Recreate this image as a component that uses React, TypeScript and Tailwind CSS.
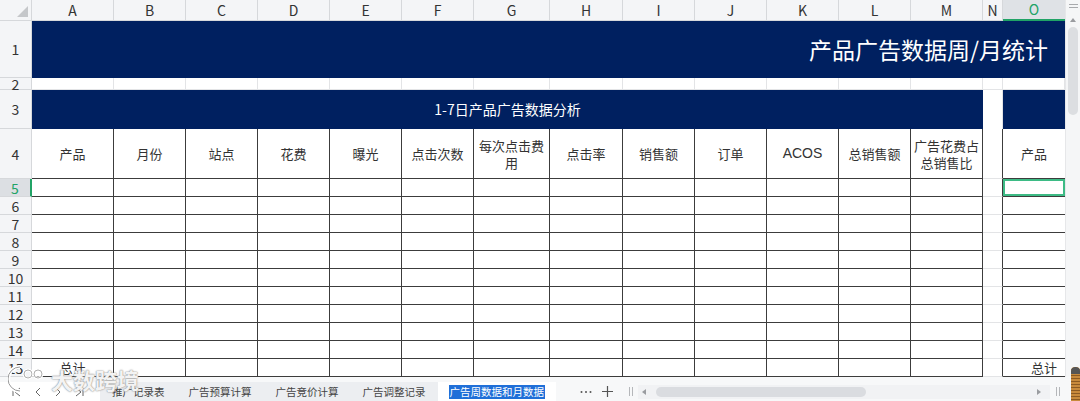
import React from 'react';

const COLS = ['A', 'B', 'C', 'D', 'E', 'F', 'G', 'H', 'I', 'J', 'K', 'L', 'M', 'N', 'O'];
const HEADS = ['产品', '月份', '站点', '花费', '曝光', '点击次数', '每次点击费用', '点击率', '销售额', '订单', 'ACOS', '总销售额', '广告花费占总销售比'];
const BODY_ROWS = [5, 6, 7, 8, 9, 10, 11, 12, 13, 14, 15];
const TABS = ['推广记录表', '广告预算计算', '广告竞价计算', '广告调整记录'];

const cjk = "font-['Noto_Sans_CJK_SC','Noto_Sans',sans-serif]";

function RowHead({ n, active }: { n: number; active?: boolean }) {
  return (
    <div
      className={
        active
          ? 'flex items-center justify-center bg-[#dcdfe3] border-b border-[#d6d8db] border-r-2 border-r-[#21a366] text-[14px] leading-none text-[#21a366]'
          : 'flex items-center justify-center bg-[#f4f5f7] border-r border-b border-[#d6d8db] text-[14px] leading-none text-[#333]'
      }
    >
      {n}
    </div>
  );
}

function Triangle({ dir }: { dir: 'l' | 'r' | 'u' }) {
  const pts = dir === 'l' ? '5,1 1,4 5,7' : dir === 'r' ? '1,1 5,4 1,7' : '1,6 4,2 7,6';
  return (
    <svg width="8" height="8" viewBox="0 0 8 8">
      <polygon points={pts} fill="#9a9ca0" />
    </svg>
  );
}

export default function App() {
  return (
    <div className={`relative w-[1080px] h-[401px] overflow-hidden bg-white ${cjk}`}>
      <div className="flex h-[377px]">
        <div className="grid grid-cols-[32px_82px_72px_72px_72px_72px_72px_76px_73px_72px_72px_72px_72px_72px_20px_62px] grid-rows-[21px_57px_12px_39px_50px_repeat(11,18px)] w-[1065px]">
          {/* column header */}
          <div className="relative bg-[#f4f5f7] border-r border-b border-[#d6d8db]">
            <svg className="absolute right-[3px] bottom-[3px]" width="11" height="11" viewBox="0 0 11 11">
              <polygon points="11,0 11,11 0,11" fill="#c5c7ca" />
            </svg>
          </div>
          {COLS.map((c) =>
            c === 'O' ? (
              <div key={c} className="flex items-center justify-center bg-[#dfe2e6] border-b-2 border-[#21a366] text-[14px] text-[#21a366]">
                {c}
              </div>
            ) : (
              <div key={c} className="flex items-center justify-center bg-[#f4f5f7] border-r border-b border-[#d6d8db] text-[14px] text-[#333]">
                {c}
              </div>
            )
          )}

          {/* row 1 */}
          <RowHead n={1} />
          <div className="col-span-15 flex items-center justify-end pr-[17px] bg-[#002060] text-white text-[23px]">
            产品广告数据周/月统计
          </div>

          {/* row 2 */}
          <RowHead n={2} />
          {COLS.map((c) => (
            <div key={c} className="border-r border-b border-[#e3e4e6]" />
          ))}

          {/* row 3 */}
          <RowHead n={3} />
          <div className="col-span-13 flex items-center justify-center bg-[#002060] text-white text-[14px]">
            1-7日产品广告数据分析
          </div>
          <div className="border-r border-[#e3e4e6] bg-white" />
          <div className="bg-[#002060]" />

          {/* row 4 */}
          <RowHead n={4} />
          {HEADS.map((h) => (
            <div
              key={h}
              className={`flex items-center justify-center px-[3px] text-center border-r border-b border-[#3c3c3c] text-[13px] leading-[17px] text-[#333] ${h === 'ACOS' ? "font-['Liberation_Sans',sans-serif] text-[14px] text-[#222]" : ''}`}
            >
              {h}
            </div>
          ))}
          <div className="border-r border-r-[#3c3c3c] border-b border-b-[#e3e4e6]" />
          <div className="flex items-center justify-center border-b border-[#3c3c3c] text-[13px] text-[#333]">产品</div>

          {/* rows 5 - 15 */}
          {BODY_ROWS.map((r) => (
            <React.Fragment key={r}>
              <RowHead n={r} active={r === 5} />
              {HEADS.map((h, i) => (
                <div key={h} className="flex items-center justify-center border-r border-b border-[#3c3c3c] text-[13px] text-[#333]">
                  {r === 15 && i === 0 ? '总计' : ''}
                </div>
              ))}
              <div className="border-r border-r-[#3c3c3c] border-b border-b-[#e3e4e6]" />
              {r === 5 ? (
                <div className="border-b border-[#3c3c3c] shadow-[inset_0_0_0_2px_#3dbb85]" />
              ) : (
                <div className="flex items-center justify-end pr-[8px] border-b border-[#3c3c3c] text-[13px] text-[#333]">
                  {r === 15 ? '总计' : ''}
                </div>
              )}
            </React.Fragment>
          ))}
        </div>

        {/* vertical scrollbar */}
        <div className="flex flex-col items-center w-[15px] bg-[#f5f6f7] border-l border-[#e6e7e9]">
          <div className="mt-[4px] flex flex-col gap-[2px]">
            <div className="w-[9px] h-[1px] bg-[#a8aaad]" />
            <div className="w-[9px] h-[1px] bg-[#a8aaad]" />
          </div>
          <div className="mt-[8px]">
            <Triangle dir="u" />
          </div>
          <div className="mt-[3px] w-[10px] h-[88px] rounded-full bg-[#dcdee1]" />
        </div>
      </div>

      {/* bottom sheet bar */}
      <div className="flex items-end h-[24px] bg-[#f7f8f9]">
        <div className="flex shrink-0 items-center gap-[14px] w-[100px] h-[19px] pl-[12px] bg-white text-[#555]">
          <svg width="9" height="10" viewBox="0 0 9 10">
            <path d="M1 1v8M8 1L3 5l5 4" fill="none" stroke="#666" strokeWidth="1" />
          </svg>
          <svg width="6" height="10" viewBox="0 0 6 10">
            <path d="M5 1L1 5l4 4" fill="none" stroke="#666" strokeWidth="1" />
          </svg>
          <svg width="6" height="10" viewBox="0 0 6 10">
            <path d="M1 1l4 4-4 4" fill="none" stroke="#666" strokeWidth="1" />
          </svg>
          <svg width="9" height="10" viewBox="0 0 9 10">
            <path d="M1 1l5 4-5 4M8 1v8" fill="none" stroke="#666" strokeWidth="1" />
          </svg>
        </div>
        <div className="flex shrink-0 items-center h-[19px] bg-[#eceef1]">
          {TABS.map((t) => (
            <div key={t} className="shrink-0 whitespace-nowrap px-[12px] text-[10.5px] leading-[19px] text-[#444]">
              {t}
            </div>
          ))}
        </div>
        <div className="flex shrink-0 items-center h-[19px] px-[11px] bg-white">
          <span className="whitespace-nowrap bg-[#1f6fd8] text-white text-[10.5px] leading-[14px] px-[1px]">广告周数据和月数据</span>
        </div>
        <div className="flex items-center h-[19px] flex-1 min-w-0 bg-[#f7f8f9]">
          <svg className="ml-[24px] shrink-0" width="12" height="4" viewBox="0 0 12 4">
            <circle cx="1.5" cy="2" r="1" fill="#555" />
            <circle cx="6" cy="2" r="1" fill="#555" />
            <circle cx="10.5" cy="2" r="1" fill="#555" />
          </svg>
          <svg className="ml-[10px] shrink-0" width="11" height="11" viewBox="0 0 11 11">
            <path d="M5.5 0v11M0 5.5h11" stroke="#555" strokeWidth="1.2" />
          </svg>
          <div className="ml-[16px] flex shrink-0 gap-[2px]">
            <div className="w-[1px] h-[9px] bg-[#b5b7ba]" />
            <div className="w-[1px] h-[9px] bg-[#b5b7ba]" />
          </div>
          <div className="ml-[5px] flex flex-1 items-center h-[14px] bg-[#f1f2f4]">
            <div className="ml-[3px]">
              <Triangle dir="l" />
            </div>
            <div className="ml-[7px] w-[210px] h-[10px] rounded-full bg-[#dadce0]" />
            <div className="ml-auto mr-[6px]">
              <Triangle dir="r" />
            </div>
          </div>
          <div className="ml-[6px] mr-[20px] flex shrink-0 gap-[2px]">
            <div className="w-[1px] h-[9px] bg-[#b5b7ba]" />
            <div className="w-[1px] h-[9px] bg-[#b5b7ba]" />
          </div>
        </div>
      </div>

      {/* resize handle at bottom right */}
      <div className="absolute right-0 top-[367px] w-[9px] h-[34px] rounded-t-[4px] overflow-hidden bg-[repeating-linear-gradient(180deg,#c88a3c_0px,#c88a3c_2px,#8c5a22_2px,#8c5a22_3px)]">
        <div className="h-[7px] rounded-t-[4px] bg-[#555]" />
      </div>

      {/* watermark */}
      <div className="absolute left-[8px] top-[363px] flex items-center gap-[3px] pointer-events-none">
        <svg width="40" height="32" viewBox="0 0 40 32">
          <path d="M12 4 A12 12 0 1 0 12 28" fill="none" stroke="#ffffff" strokeWidth="4" />
          <path d="M12 4 A12 12 0 1 0 12 28" fill="none" stroke="#9a9a9a" strokeWidth="1" />
          <circle cx="20" cy="11" r="4" fill="none" stroke="#fff" strokeWidth="3" />
          <circle cx="20" cy="11" r="4" fill="none" stroke="#9a9a9a" strokeWidth="0.8" />
          <circle cx="30" cy="11" r="4" fill="none" stroke="#fff" strokeWidth="3" />
          <circle cx="30" cy="11" r="4" fill="none" stroke="#9a9a9a" strokeWidth="0.8" />
        </svg>
        <span className="text-[22px] leading-none font-bold text-white/90 [text-shadow:0_0_1px_#888,0_0_2px_#999]">大数跨境</span>
      </div>
    </div>
  );
}
